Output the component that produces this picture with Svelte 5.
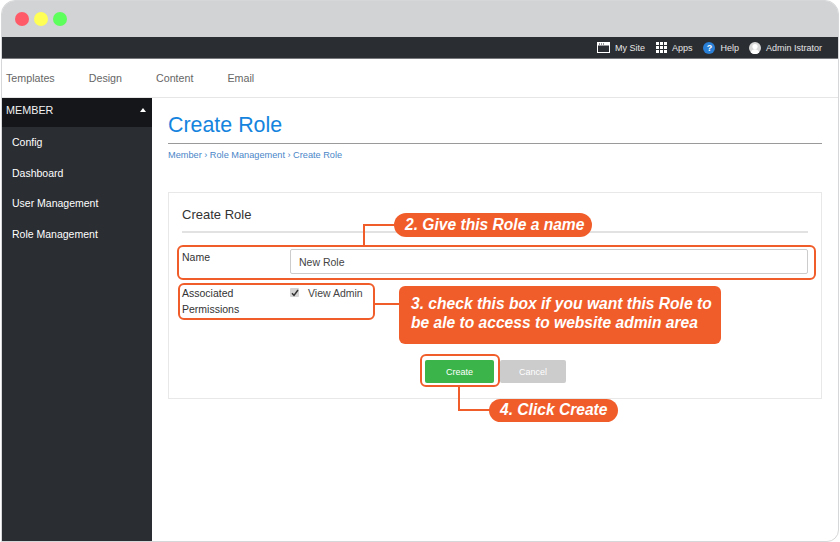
<script lang="ts">
  const navItems = ["Templates", "Design", "Content", "Email"];
  const sideItems = ["Config", "Dashboard", "User Management", "Role Management"];
</script>

<div class="window">
  <header class="titlebar">
    <span class="dot red"></span>
    <span class="dot yellow"></span>
    <span class="dot green"></span>
  </header>

  <div class="topbar">
    <span class="top-item my-site">
      <svg width="13" height="11" viewBox="0 0 13 11">
        <rect x="0.5" y="0.5" width="12" height="10" fill="none" stroke="#fff" />
        <rect x="0.5" y="0.5" width="12" height="3" fill="#fff" />
        <path d="M2 2h1M4 2h1M6 2h1" stroke="#2a2d32" />
      </svg>
      My Site
    </span>
    <span class="top-item apps">
      <svg width="11" height="11" viewBox="0 0 11 11" fill="#fff">
        <rect x="0" y="0" width="3" height="3" /><rect x="4" y="0" width="3" height="3" /><rect x="8" y="0" width="3" height="3" />
        <rect x="0" y="4" width="3" height="3" /><rect x="4" y="4" width="3" height="3" /><rect x="8" y="4" width="3" height="3" />
        <rect x="0" y="8" width="3" height="3" /><rect x="4" y="8" width="3" height="3" /><rect x="8" y="8" width="3" height="3" />
      </svg>
      Apps
    </span>
    <span class="top-item help">
      <span class="help-icon">?</span>
      Help
    </span>
    <span class="top-item user">
      <svg width="12" height="12" viewBox="0 0 12 12">
        <circle cx="6" cy="6" r="6" fill="#d9d9d9" />
        <circle cx="6" cy="4.6" r="2.6" fill="#fff" />
        <path d="M1.8 10.4c.6-2.4 2.4-3.2 4.2-3.2s3.6.8 4.2 3.2A6 6 0 0 1 1.8 10.4z" fill="#fff" />
      </svg>
      Admin Istrator
    </span>
  </div>

  <nav class="nav">
    {#each navItems as item}
      <span class="nav-item">{item}</span>
    {/each}
  </nav>

  <div class="body">
    <aside class="sidebar">
      <div class="side-head">
        MEMBER
        <span class="caret"></span>
      </div>
      {#each sideItems as item}
        <div class="side-item">{item}</div>
      {/each}
    </aside>

    <main class="content">
      <h1>Create Role</h1>
      <div class="crumbs">Member › Role Management › Create Role</div>

      <section class="card">
        <h2>Create Role</h2>
        <div class="row name-row">
          <label for="role-name">Name</label>
          <input id="role-name" type="text" value="New Role" />
        </div>
        <div class="row perm-row">
          <span class="label">Associated Permissions</span>
          <label class="check">
            <span class="box">
              <svg width="8" height="8" viewBox="0 0 8 8"><path d="M1 4.2l2 2.2L7 1" fill="none" stroke="#333" stroke-width="1.5" /></svg>
            </span>
            View Admin
          </label>
        </div>
        <div class="actions">
          <button class="btn create">Create</button>
          <button class="btn cancel">Cancel</button>
        </div>
      </section>
    </main>
  </div>

  <!-- tutorial annotations on top of the page -->
  <div class="ring ring-name"></div>
  <div class="ring ring-perm"></div>
  <div class="ring ring-create"></div>

  <div class="wire wire-name"></div>
  <div class="wire wire-perm"></div>
  <div class="wire wire-create"></div>

  <div class="call call-name">2. Give this Role a name</div>
  <div class="call call-perm">3. check this box if you want this Role to<br />be ale to access to website admin area</div>
  <div class="call call-create">4. Click Create</div>
</div>

<style>
  :global(body) {
    margin: 0;
    background: #fff;
  }

  .window {
    position: relative;
    width: 838px;
    height: 542px;
    margin-left: 1px;
    box-sizing: border-box;
    border: 1px solid #d6d7d8;
    border-top-left-radius: 14px;
    border-top-right-radius: 14px;
    border-bottom-right-radius: 12px;
    overflow: hidden;
    font-family: "Liberation Sans", Arial, sans-serif;
    display: flex;
    flex-direction: column;
    background: #fff;
  }

  .titlebar {
    height: 36px;
    flex: none;
    background: #d1d3d4;
    display: flex;
    align-items: center;
    gap: 5px;
    padding: 0 0 1px 13px;
    box-sizing: border-box;
  }

  .dot {
    width: 14px;
    height: 14px;
    border-radius: 50%;
  }
  .red { background: #ff5a68; }
  .yellow { background: #ffff55; }
  .green { background: #5cff5c; }

  .topbar {
    height: 22px;
    flex: none;
    background: #2a2d32;
    border-bottom: 1px solid #77797c;
    box-sizing: border-box;
    display: flex;
    justify-content: flex-end;
    align-items: center;
    padding-right: 16px;
    color: #e6e6e6;
    font-size: 9px;
  }

  .top-item {
    display: flex;
    align-items: center;
    gap: 5px;
    margin-left: 11px;
  }
  .top-item.user {
    margin-left: 10px;
  }

  .help-icon {
    width: 12px;
    height: 12px;
    border-radius: 50%;
    background: #2a7fd6;
    color: #fff;
    font-size: 9px;
    font-weight: bold;
    display: flex;
    align-items: center;
    justify-content: center;
  }

  .nav {
    height: 39px;
    flex: none;
    box-sizing: border-box;
    border-bottom: 1px solid #e6e6e6;
    display: flex;
    align-items: center;
    padding-left: 4px;
    gap: 34px;
    font-size: 10.7px;
    color: #666;
  }

  .body {
    flex: 1;
    display: flex;
    min-height: 0;
  }

  .sidebar {
    width: 150px;
    flex: none;
    background: #2a2d32;
    color: #fff;
    font-size: 10.5px;
  }

  .side-head {
    height: 29px;
    background: #15161a;
    display: flex;
    align-items: center;
    justify-content: space-between;
    padding: 0 6px 5px 4px;
    box-sizing: border-box;
    font-size: 10.8px;
    color: #f2f2f2;
  }

  .caret {
    width: 0;
    height: 0;
    border-left: 3.5px solid transparent;
    border-right: 3.5px solid transparent;
    border-bottom: 4px solid #fff;
    margin-bottom: 1px;
  }

  .side-item {
    height: 30.6px;
    line-height: 30.6px;
    padding-left: 10px;
  }

  .content {
    flex: 1;
    padding: 0 16px;
  }

  h1 {
    margin: 0;
    padding: 14px 0 5px;
    font-size: 21.4px;
    line-height: 26px;
    font-weight: normal;
    color: #1584de;
    border-bottom: 1px solid #9a9a9a;
  }

  .crumbs {
    margin-top: 6px;
    font-size: 9.2px;
    line-height: 11px;
    color: #4a86c8;
  }

  .card {
    margin-top: 31px;
    height: 207px;
    box-sizing: border-box;
    border: 1px solid #e8e8e8;
    padding: 0 13px;
    color: #333;
    display: flex;
    flex-direction: column;
  }

  h2 {
    margin: 0;
    padding: 14px 0 9px;
    font-size: 13px;
    line-height: 15px;
    font-weight: normal;
    color: #333;
    border-bottom: 2px solid #e2e2e2;
  }

  .row {
    display: flex;
    font-size: 10.5px;
  }

  .name-row {
    margin-top: 16px;
  }

  .name-row label {
    width: 108px;
    flex: none;
    line-height: 16px;
  }

  input {
    flex: 1;
    height: 25px;
    box-sizing: border-box;
    border: 1px solid #ccc;
    border-radius: 2px;
    padding: 0 8px;
    font: inherit;
    color: #444;
    outline: none;
  }

  .perm-row {
    margin-top: 11px;
  }

  .label {
    width: 108px;
    flex: none;
    line-height: 16px;
    padding-right: 30px;
    box-sizing: border-box;
  }

  .check {
    display: flex;
    align-items: flex-start;
    gap: 9px;
    line-height: 16px;
    color: #444;
  }

  .box {
    width: 9px;
    height: 9px;
    margin-top: 3px;
    background: #d4d4d4;
    border-radius: 1px;
    display: flex;
    align-items: center;
    justify-content: center;
  }

  .actions {
    display: flex;
    justify-content: center;
    gap: 6px;
    margin-top: 43px;
    padding-left: 1px;
  }

  .btn {
    width: 69px;
    height: 23px;
    border: none;
    border-radius: 2px;
    color: #fff;
    font: inherit;
    font-size: 9px;
    padding: 0;
  }
  .create { background: #3bb54a; }
  .cancel { background: #cccccc; width: 66px; }

  .ring {
    position: absolute;
    border: 2px solid #f15d2a;
    border-radius: 6px;
    box-sizing: border-box;
  }
  .ring-name { left: 175px; top: 244px; width: 639px; height: 35px; }
  .ring-perm { left: 176px; top: 282px; width: 197px; height: 37px; }
  .ring-create { left: 418px; top: 353px; width: 80px; height: 33px; }

  .wire {
    position: absolute;
    border: 0 solid #f15d2a;
    box-sizing: border-box;
  }
  .wire-name { left: 361px; top: 223px; width: 34px; height: 22px; border-left-width: 2px; border-top-width: 2px; }
  .wire-perm { left: 371px; top: 302px; width: 28px; height: 2px; border-top-width: 2px; }
  .wire-create { left: 456px; top: 385px; width: 34px; height: 25px; border-left-width: 2px; border-bottom-width: 2px; }

  .call {
    position: absolute;
    background: #f15d2a;
    color: #fff;
    font-weight: bold;
    font-style: italic;
    font-size: 15.6px;
    box-sizing: border-box;
    white-space: nowrap;
  }
  .call-name {
    left: 392px;
    top: 212px;
    width: 198px;
    height: 24px;
    line-height: 24px;
    border-radius: 12px;
    padding-left: 11px;
  }
  .call-perm {
    left: 397px;
    top: 285px;
    width: 322px;
    height: 58px;
    border-radius: 6px;
    padding: 8px 0 0 12px;
    line-height: 19px;
  }
  .call-create {
    left: 487px;
    top: 398px;
    width: 129px;
    height: 23px;
    line-height: 22px;
    border-radius: 12px;
    padding-left: 11px;
  }
</style>
